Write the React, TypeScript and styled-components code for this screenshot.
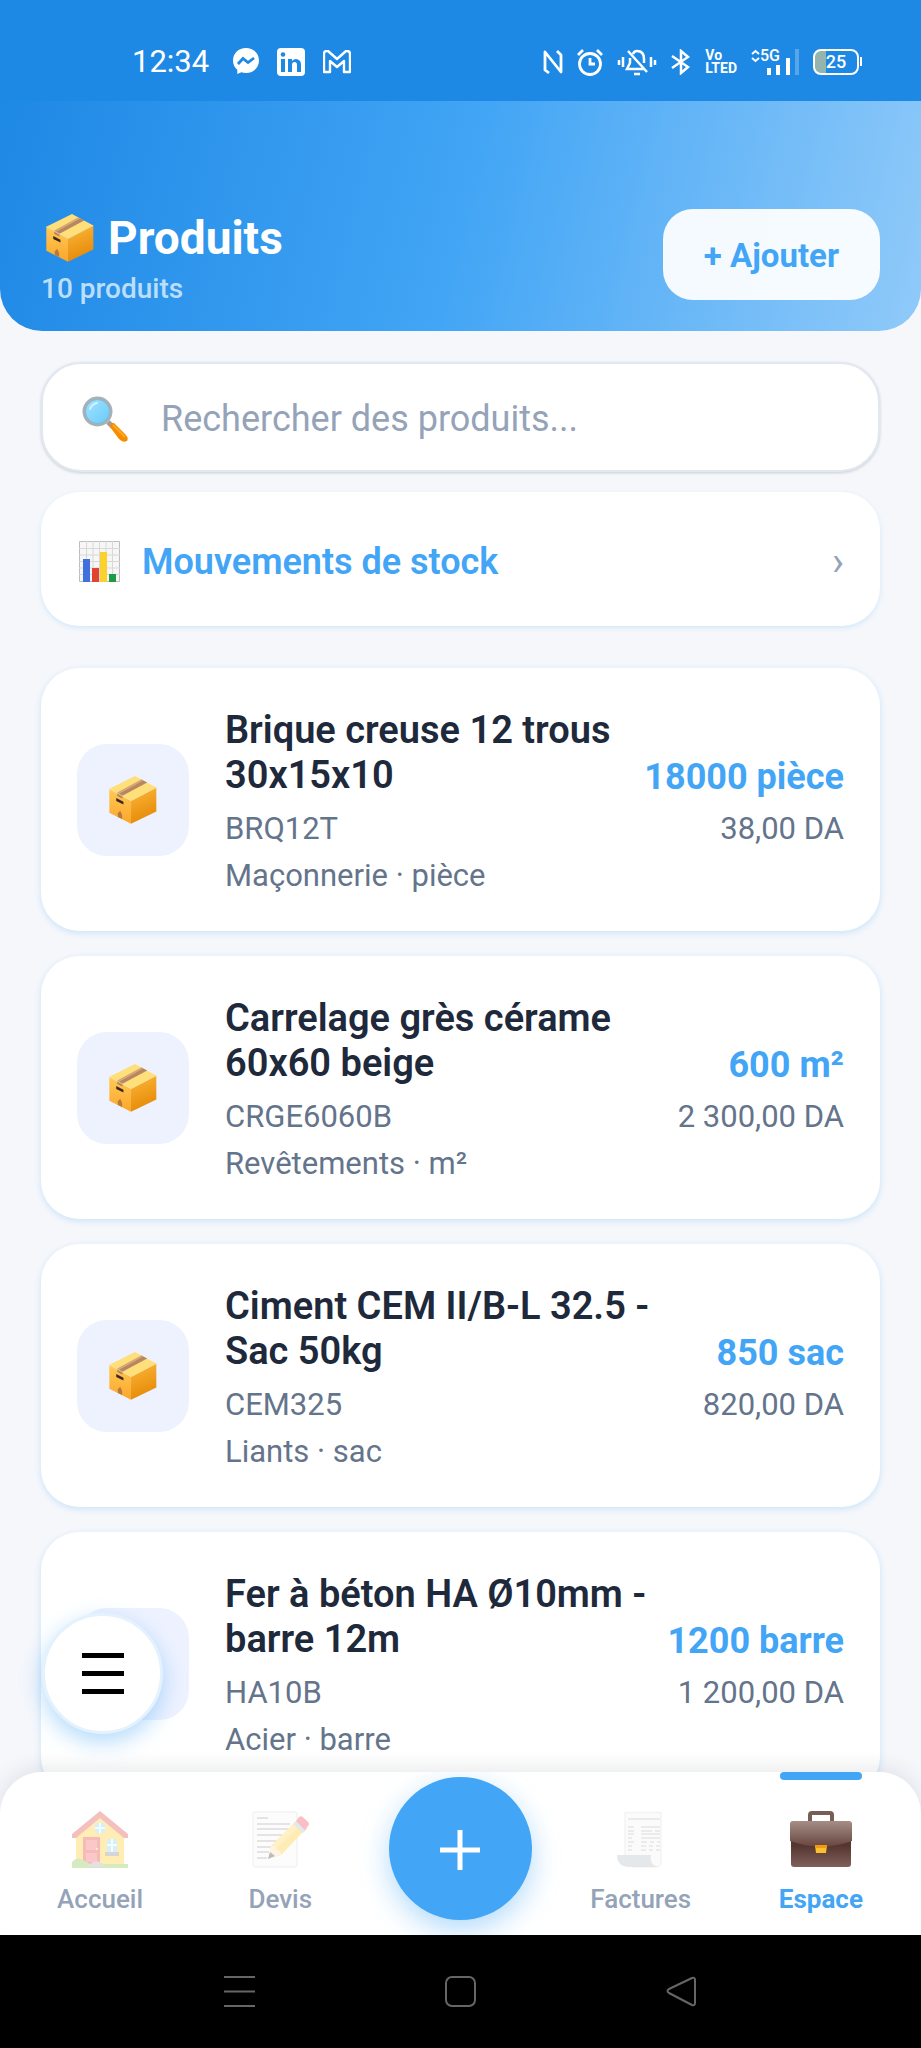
import React from 'react';
import styled, { createGlobalStyle } from 'styled-components';

interface Product {
  name: string;
  code: string;
  category: string;
  unit: string;
  stock: string;
  price: string;
}

const products: Product[] = [
  { name: 'Brique creuse 12 trous 30x15x10', code: 'BRQ12T', category: 'Maçonnerie', unit: 'pièce', stock: '18000', price: '38,00' },
  { name: 'Carrelage grès cérame 60x60 beige', code: 'CRGE6060B', category: 'Revêtements', unit: 'm²', stock: '600', price: '2 300,00' },
  { name: 'Ciment CEM II/B-L 32.5 - Sac 50kg', code: 'CEM325', category: 'Liants', unit: 'sac', stock: '850', price: '820,00' },
  { name: 'Fer à béton HA Ø10mm - barre 12m', code: 'HA10B', category: 'Acier', unit: 'barre', stock: '1200', price: '1 200,00' },
];

const GlobalStyle = createGlobalStyle`
  :root {
    --primary: #42a5f5;
    --primary-dark: #1e88e5;
    --text: #1e293b;
    --text-soft: #64748b;
    --text-muted: #94a3b8;
    --surface: #f5f7fb;
  }

  * {
    box-sizing: border-box;
  }

  body {
    margin: 0;
    font-family: Roboto, 'Liberation Sans', sans-serif;
    color: var(--text);
    background: var(--surface);
  }

  button,
  input {
    font-family: inherit;
  }

  button {
    padding: 0;
    border: 0;
    cursor: pointer;
  }

  h1,
  h2,
  p {
    margin: 0;
  }

  svg {
    display: block;
    flex-shrink: 0;
  }
`;

const Screen = styled.div`
  display: flex;
  flex-direction: column;
  height: 100vh;
  overflow: hidden;
`;

/* Status bar */

const StatusBar = styled.div`
  display: flex;
  flex-shrink: 0;
  align-items: center;
  justify-content: space-between;
  height: 101px;
  padding: 22px 59px 0 132px;
  color: #fff;
  background: var(--primary-dark);
`;

const StatusGroup = styled.div<{ $gap: number }>`
  display: flex;
  align-items: center;
  gap: ${({ $gap }) => $gap}px;
`;

const Clock = styled.time`
  margin-right: 6px;
  font-size: 31px;
  line-height: 36px;
`;

const Volte = styled.span`
  display: flex;
  flex-direction: column;
  font-size: 14px;
  font-weight: 700;
  line-height: 13px;
`;

const Network = styled.span`
  display: flex;
  align-items: flex-start;
`;

const NetworkLabel = styled.span`
  margin-right: -14px;
  font-size: 16px;
  font-weight: 500;
  line-height: 14px;
`;

const Battery = styled.span`
  position: relative;
  display: flex;
  align-items: center;
  justify-content: center;
  width: 46px;
  height: 26px;
  margin-right: 3px;
  border: 2px solid #fff;
  border-radius: 8px;
  font-size: 18px;
  font-weight: 500;
  line-height: 20px;
  background: linear-gradient(to right, #93b5ad 25%, transparent 25%);

  &::after {
    content: '';
    position: absolute;
    right: -5px;
    width: 2px;
    height: 9px;
    background: #fff;
  }
`;

/* Header */

const Header = styled.header`
  display: flex;
  flex-shrink: 0;
  align-items: center;
  justify-content: space-between;
  padding: 102px 41px 26px;
  border-radius: 0 0 42px 42px;
  background: linear-gradient(104deg, #1e88e5, #42a5f5 50%, #90caf9);
`;

const Title = styled.h1`
  display: flex;
  align-items: center;
  gap: 14px;
  padding-left: 5px;
  font-size: 46px;
  font-weight: 700;
  line-height: 70px;
  color: #fff;
`;

const Subtitle = styled.p`
  font-size: 28px;
  font-weight: 500;
  line-height: 32px;
  color: #bbdefb;
`;

const AddButton = styled.button`
  height: 91px;
  padding: 3px 41px 0;
  border-radius: 30px;
  font-size: 33px;
  font-weight: 700;
  color: var(--primary);
  background: rgba(255, 255, 255, 0.93);
`;

/* Content */

const Body = styled.div`
  position: relative;
  display: flex;
  flex: 1;
  flex-direction: column;
  min-height: 0;
`;

const Content = styled.main`
  flex: 1;
  padding: 31px 41px 0;
  overflow: hidden;
`;

const SearchBox = styled.label`
  display: flex;
  align-items: center;
  gap: 33px;
  height: 110px;
  padding: 3px 39px 0;
  border: 2px solid #e2e8f0;
  border-radius: 40px;
  background: #fff;
  box-shadow: 0 1px 3px rgba(30, 41, 59, 0.2);
`;

const SearchInput = styled.input`
  flex: 1;
  min-width: 0;
  padding: 0;
  border: 0;
  outline: 0;
  font-size: 36px;
  line-height: 42px;
  color: var(--text);
  background: none;

  &::placeholder {
    color: var(--text-muted);
    opacity: 1;
  }
`;

const StockLink = styled.a`
  display: flex;
  align-items: center;
  gap: 22px;
  height: 134px;
  margin: 20px 0 42px;
  padding: 5px 36px 0 38px;
  border-radius: 38px;
  font-size: 36px;
  font-weight: 600;
  line-height: 42px;
  color: var(--primary);
  text-decoration: none;
  background: #fff;
  box-shadow: 0 2px 5px rgba(66, 165, 245, 0.18);
`;

const Chevron = styled.span`
  margin-left: auto;
  font-size: 40px;
  font-weight: 400;
  color: var(--text-muted);
`;

const ProductList = styled.ul`
  display: flex;
  flex-direction: column;
  gap: 25px;
  margin: 0;
  padding: 0;
  list-style: none;
`;

const ProductCard = styled.li`
  display: flex;
  align-items: center;
  padding: 36px 36px 35px;
  border-radius: 38px;
  background: #fff;
  box-shadow: 0 2px 6px rgba(66, 165, 245, 0.24);
`;

const ProductThumb = styled.div`
  display: flex;
  flex-shrink: 0;
  align-items: center;
  justify-content: center;
  width: 112px;
  height: 112px;
  margin-right: 36px;
  border-radius: 30px;
  background: #eef2ff;
`;

const ProductInfo = styled.div`
  flex: 1;
  padding: 4px 12px 0 0;
`;

const ProductName = styled.h2`
  margin-bottom: 10px;
  font-size: 38px;
  font-weight: 600;
  line-height: 45px;
`;

const ProductMeta = styled.p`
  font-size: 31px;
  line-height: 41px;
  color: var(--text-soft);

  & + & {
    margin-top: 6px;
  }
`;

const ProductStock = styled.div`
  padding-top: 4px;
  text-align: right;
  white-space: nowrap;
`;

const Quantity = styled.p`
  margin-bottom: 10px;
  font-size: 36px;
  font-weight: 700;
  line-height: 42px;
  color: var(--primary);
`;

const MenuButton = styled.button`
  position: absolute;
  bottom: 201px;
  left: 42px;
  display: flex;
  align-items: center;
  justify-content: center;
  width: 121px;
  height: 121px;
  border: 3px solid #e3f2fd;
  border-radius: 50%;
  color: #000;
  background: #fff;
  box-shadow: 0 8px 22px rgba(66, 165, 245, 0.4);
`;

/* Bottom navigation */

// pulled up over the list, which stays visible behind the rounded corners
const TabBarShell = styled.div`
  position: relative;
  margin-top: -163px;
  border-radius: 42px 42px 0 0;
  box-shadow: 0 -4px 20px rgba(30, 41, 59, 0.1);
`;

const TabBar = styled.nav`
  display: grid;
  grid-template-columns: repeat(5, 1fr);
  height: 163px;
  padding: 0 10px;
  border-radius: 42px 42px 0 0;
  overflow: hidden;
  background: #fff;
`;

const Tab = styled.a<{ $active?: boolean }>`
  display: flex;
  flex-direction: column;
  align-items: center;
  font-size: 26px;
  font-weight: ${({ $active }) => ($active ? 700 : 500)};
  line-height: 32px;
  color: ${({ $active }) => ($active ? 'var(--primary)' : 'var(--text-muted)')};
  text-decoration: none;

  &::before {
    content: '';
    width: 82px;
    height: 8px;
    margin-bottom: 31px;
    border-radius: 4px;
    background: ${({ $active }) => ($active ? 'var(--primary)' : 'transparent')};
  }

  svg {
    margin-bottom: 15px;
    opacity: ${({ $active }) => ($active ? 1 : 0.35)};
  }
`;

const CreateButton = styled.button`
  display: flex;
  align-items: center;
  justify-content: center;
  justify-self: center;
  width: 143px;
  height: 143px;
  margin-top: 5px;
  padding-top: 3px;
  border-radius: 50%;
  color: #fff;
  background: var(--primary);
  box-shadow: 0 10px 28px rgba(66, 165, 245, 0.4);
`;

const SystemNav = styled.div`
  display: grid;
  flex-shrink: 0;
  grid-template-columns: repeat(3, 1fr);
  height: 113px;
  padding: 0 14%;
  background: #000;
`;

const SystemButton = styled.button`
  display: flex;
  align-items: center;
  justify-content: center;
  color: #666;
  background: none;
`;

/* Illustrations */

const BoxIcon = () => (
  <svg width="48" height="48" viewBox="0 0 144 146" aria-hidden="true">
    <defs>
      <linearGradient id="box-left" x1="0" y1="0" x2="0" y2="1">
        <stop offset="0" stopColor="#ffca55" />
        <stop offset="1" stopColor="#fba62b" />
      </linearGradient>
      <linearGradient id="box-right" x1="0" y1="0" x2="0.3" y2="1">
        <stop offset="0" stopColor="#fdb83c" />
        <stop offset="1" stopColor="#e68a08" />
      </linearGradient>
    </defs>
    <path d="M78 0 143 35 66 75 0 39Z" fill="#ffdf79" />
    <path d="M0 39 66 75V145L0 112Z" fill="url(#box-left)" />
    <path d="M66 75 143 35V108L66 145Z" fill="url(#box-right)" />
    <path d="M98 11 115 20 40 60V69L24 61V51Z" fill="#b88761" />
    <path d="M24 51 98 11 103 14 30 54Z" fill="#d6a977" />
    <path d="M21 67 43 78V87L21 76Z" fill="#3e2723" />
    <path d="M26 113 33 106 39 119V131L26 125Z" fill="#b9793c" />
    <path d="M0 39 66 75 143 35" fill="none" stroke="#ffe9a0" strokeWidth="2" />
  </svg>
);

const MagnifierIcon = () => (
  <svg width="46" height="46" viewBox="0 0 46 46" aria-hidden="true">
    <defs>
      <linearGradient id="lens" x1="0" y1="0" x2="1" y2="1">
        <stop offset="0" stopColor="#a8e2ff" />
        <stop offset="1" stopColor="#63cbfb" />
      </linearGradient>
    </defs>
    <path d="m26 26 5 5" stroke="#9e9e9e" strokeWidth="5" />
    <path d="M28 31q0-4 4-4l11 11q4 4 2 7-4 2-8-2Z" fill="#f88c00" />
    <path d="m31 29 12 12" stroke="#ffa726" strokeWidth="2" />
    <circle cx="15.5" cy="15.5" r="13.5" fill="url(#lens)" stroke="#a9b0b4" strokeWidth="3" />
    <circle cx="15.5" cy="15.5" r="12" fill="none" stroke="#7fb8d4" />
    <path d="M8 13q2-5 7-6" fill="none" stroke="#d5f2ff" strokeWidth="2" strokeLinecap="round" />
  </svg>
);

const ChartIcon = () => (
  <svg width="41" height="41" viewBox="0 0 41 41" aria-hidden="true">
    <path d="M.5.5h40v40H.5Z" fill="#f6f6f6" stroke="#bdbdbd" />
    <path d="M7.5 0v41M14 0v41M20.5 0v41M27 0v41M33.5 0v41M0 7.5h41M0 14h41M0 20.5h41M0 27h41M0 33.5h41" stroke="#d8d8d8" />
    <path d="M4 18h7v23H4Z" fill="#3f70dd" />
    <path d="M13 27h7v14h-7Z" fill="#e24330" />
    <path d="M21 11h7v30h-7Z" fill="#fbd22d" />
    <path d="M30 33h7v8h-7Z" fill="#1f9a45" />
  </svg>
);

const HouseIcon = () => (
  <svg width="56" height="57" viewBox="0 0 56 57" aria-hidden="true">
    <path d="M4 26 28 5l24 21v30H4Z" fill="#ffca28" />
    <path d="M11 26h17v27H11Z" fill="#e53935" />
    <path d="M14 29h11v10H14Zm0 13h11v9H14Z" fill="#f0625f" />
    <circle cx="25" cy="38" r="1" fill="#ffe082" />
    <path d="M23 12h10v10H23Z" fill="#81d4fa" />
    <path d="M28 12v10M23 17h10" stroke="#fff" strokeWidth="1.5" />
    <path d="M35 28h10v13H35Z" fill="#81d4fa" />
    <path d="M40 28v13M35 34h10" stroke="#fff" strokeWidth="1.5" />
    <path d="M33 41h14v4H33Z" fill="#8d8585" />
    <path d="M0 23 28 0l28 23v4h-4L28 7 4 27H0Z" fill="#dd4b46" />
    <path d="M0 57v-6q5-6 11-2l7 4h38v4Z" fill="#8bc34a" />
    <path d="M16 56q5-8 12-5 4 2 5 5Z" fill="#b5a9ac" />
  </svg>
);

const MemoIcon = () => (
  <svg width="57" height="57" viewBox="0 0 57 57" aria-hidden="true">
    <rect x="1" y="1" width="44" height="55" rx="2" fill="#f7f7f7" stroke="#cfcfcf" />
    <path d="M5 7h11M5 13h33M5 18h31M5 24h26M5 30h20M5 36h14M5 41h12M5 47h10" stroke="#a0a0a0" strokeWidth="1.5" />
    <path d="m16 48 3-13 22-22 10 8-22 23Z" fill="#ffca28" />
    <path d="m19 35 22-22 4 4-22 22Z" fill="#ffd95c" />
    <path d="m16 48 3-13q5 0 6 4 4 0 4 5Z" fill="#ffe0b2" />
    <path d="m16 48 2-7 5 4Z" fill="#424242" />
    <path d="m41 13 4-4 10 9-4 4Z" fill="#b0bec5" />
    <path d="m44 10 3-4q2-2 5 1l4 4q2 2 0 4l-3 4Z" fill="#ee4a5c" />
  </svg>
);

const ReceiptIcon = () => (
  <svg width="56" height="57" viewBox="0 0 56 57" aria-hidden="true">
    <path d="m12 1 2 1 2-1 2 1 2-1 2 1 2-1 2 1 2-1 2 1 2-1 2 1 2-1 2 1 2-1 2 1 2-1 2 1 2-1v50q0 5-5 5H20q-8-3-8-13Z" fill="#f4f4f4" stroke="#d5d5d5" />
    <path d="M15 8h32M15 16h6M28 16h19M15 20h6M28 20h11m3 0h5M15 23h6M28 23h19M15 27h4m9 0h19M15 31h6m7 0h6m3 0h4m3 0h3M15 35h4m9 0h5m3 0h4m3 0h4M15 39h4m9 0h5m3 0h4m3 0h4" stroke="#999" strokeWidth="1.2" />
    <path d="M4 44h34q-2 10 8 12H15Q4 55 4 44Z" fill="#b7c0c8" />
  </svg>
);

const BriefcaseIcon = () => (
  <svg width="62" height="57" viewBox="0 0 62 57" aria-hidden="true">
    <defs>
      <linearGradient id="case-body" x1="0" y1="0" x2="0" y2="1">
        <stop offset="0.4" stopColor="#54352f" />
        <stop offset="1" stopColor="#80605a" />
      </linearGradient>
      <linearGradient id="case-flap" x1="0" y1="0" x2="0" y2="1">
        <stop offset="0" stopColor="#a58e87" />
        <stop offset="1" stopColor="#68463f" />
      </linearGradient>
    </defs>
    <path d="M20 11V4q0-2 2-2h18q2 0 2 2v7" fill="none" stroke="#795c54" strokeWidth="4" />
    <path d="M1 20h60v33q0 3-3 3H4q-3 0-3-3Z" fill="url(#case-body)" />
    <path d="M0 13q0-3 3-3h56q3 0 3 3v17Q31 41 0 30Z" fill="url(#case-flap)" />
    <path d="M25 34h12l-1 8H26Z" fill="#fbc02d" />
    <path d="M25 34h12v3H25Z" fill="#f09a13" />
  </svg>
);

const StatusIcons = () => (
  <>
    <svg width="20" height="26" viewBox="0 0 20 26" fill="none" stroke="#fff" strokeWidth="2.8">
      <path d="M6 24 2 21V3l16 20V6l-4-4" strokeLinejoin="round" />
    </svg>
    <svg width="26" height="28" viewBox="0 0 26 28" fill="none" stroke="#fff" strokeWidth="2.8">
      <circle cx="13" cy="16" r="10.5" />
      <path d="M13 10v6h5M1 7l5-5M25 7l-5-5" />
    </svg>
    <svg width="40" height="28" viewBox="0 0 40 28" fill="none" stroke="#fff" strokeWidth="2.5">
      <path d="M2 12v5M6 9v10M34 9v10M38 12v5M16 6q1-3 4-3 7 0 7 8v4M13 10v5l-3 6h17M11 3l19 21M17 26h6" />
    </svg>
    <svg width="20" height="26" viewBox="0 0 20 26" fill="none" stroke="#fff" strokeWidth="2.5">
      <path d="m1 7 16 11-7 6V2l7 6L1 19" />
    </svg>
  </>
);

const Bars = ({ size, height, stroke }: { size: number; height: number; stroke: number }) => (
  <svg width={size} height={height} viewBox={`0 0 ${size} ${height}`} stroke="currentColor" strokeWidth={stroke}>
    <path d={`M0 ${stroke / 2}h${size}M0 ${height / 2}h${size}M0 ${height - stroke / 2}h${size}`} />
  </svg>
);

const tabs = [
  { label: 'Accueil', icon: <HouseIcon /> },
  { label: 'Devis', icon: <MemoIcon /> },
  null,
  { label: 'Factures', icon: <ReceiptIcon /> },
  { label: 'Espace', icon: <BriefcaseIcon />, active: true },
];

const ProductRow: React.FC<{ product: Product }> = ({ product }) => {
  return (
    <ProductCard>
      <ProductThumb>
        <BoxIcon />
      </ProductThumb>
      <ProductInfo>
        <ProductName>{product.name}</ProductName>
        <ProductMeta>{product.code}</ProductMeta>
        <ProductMeta>
          {product.category} · {product.unit}
        </ProductMeta>
      </ProductInfo>
      <ProductStock>
        <Quantity>
          {product.stock} {product.unit}
        </Quantity>
        <ProductMeta>{product.price} DA</ProductMeta>
      </ProductStock>
    </ProductCard>
  );
};

const App: React.FC = () => {
  return (
    <>
      <GlobalStyle />
      <Screen>
        <StatusBar>
          <StatusGroup $gap={18}>
            <Clock>12:34</Clock>
            <svg width="26" height="27" viewBox="0 0 26 27">
              <path d="M13 0C5.5 0 0 5.4 0 12.5c0 4 1.6 7 4.3 9.3V26l4-1.7c1.5.5 3 .7 4.7.7 7.5 0 13-5.4 13-12.500S20.5 0 13 0Z" fill="#fff" />
              <path d="m5 16 5-5.5 5 4 6-4.500" fill="none" stroke="#1e88e5" strokeWidth="2.8" />
            </svg>
            <svg width="28" height="28" viewBox="0 0 28 28">
              <rect width="28" height="28" rx="4" fill="#fff" />
              <path d="M4 11h4v13H4ZM11 11h4v2q4-4 8 0 1 1 1 4v7h-4v-7q0-3-2.5-3T15 17v7h-4Z" fill="#1e88e5" />
              <circle cx="6" cy="6.5" r="2.3" fill="#1e88e5" />
            </svg>
            <svg width="28" height="24" viewBox="0 0 28 24" fill="none" stroke="#fff" strokeWidth="2.4">
              <path d="M1 22V4q0-3 3-3h1l9 8 9-8h1q3 0 3 3v18h-6V11l-7 6-7-6v11Z" strokeLinejoin="round" />
            </svg>
          </StatusGroup>
          <StatusGroup $gap={14}>
            <StatusIcons />
            <Volte>
              <span>Vo</span>
              <span>LTED</span>
            </Volte>
            <Network>
              <svg width="9" height="14" viewBox="0 0 9 14" fill="none" stroke="#fff" strokeWidth="2">
                <path d="m1 5 3.5-3L8 5M1 9l3.5 3L8 9" />
              </svg>
              <NetworkLabel>5G</NetworkLabel>
              <svg width="33" height="26" viewBox="0 0 33 26" stroke="#fff" strokeWidth="4">
                <path d="M3 19v7M12 16v10M22 9v17" />
                <path d="M31 0v26" opacity="0.25" />
              </svg>
            </Network>
            <Battery>25</Battery>
          </StatusGroup>
        </StatusBar>

        <Header>
          <div>
            <Title>
              <BoxIcon />
              Produits
            </Title>
            <Subtitle>10 produits</Subtitle>
          </div>
          <AddButton type="button">+ Ajouter</AddButton>
        </Header>

        <Body>
          <Content>
            <SearchBox>
              <MagnifierIcon />
              <SearchInput type="text" aria-label="Rechercher des produits" placeholder="Rechercher des produits..." />
            </SearchBox>
            <StockLink href="#mouvements">
              <ChartIcon />
              Mouvements de stock
              <Chevron>›</Chevron>
            </StockLink>
            <ProductList>
              {products.map(product => (
                <ProductRow key={product.code} product={product} />
              ))}
            </ProductList>
          </Content>
          <TabBarShell>
            <TabBar>
              {tabs.map(tab =>
                tab ? (
                  <Tab key={tab.label} href={`#${tab.label.toLowerCase()}`} $active={tab.active}>
                    {tab.icon}
                    {tab.label}
                  </Tab>
                ) : (
                  <CreateButton key="create" type="button" aria-label="Créer">
                    <svg width="40" height="40" viewBox="0 0 40 40" stroke="currentColor" strokeWidth="5">
                      <path d="M20 0v40M0 20h40" />
                    </svg>
                  </CreateButton>
                )
              )}
            </TabBar>
          </TabBarShell>
          <MenuButton type="button" aria-label="Menu">
            <Bars size={42} height={41} stroke={5} />
          </MenuButton>
        </Body>

        <SystemNav>
          <SystemButton type="button" aria-label="Applications récentes">
            <Bars size={31} height={31} stroke={2} />
          </SystemButton>
          <SystemButton type="button" aria-label="Écran d'accueil">
            <svg width="31" height="31" viewBox="0 0 31 31" fill="none" stroke="currentColor" strokeWidth="2">
              <rect x="1" y="1" width="29" height="29" rx="6" />
            </svg>
          </SystemButton>
          <SystemButton type="button" aria-label="Retour">
            <svg width="31" height="31" viewBox="0 0 31 31" fill="none" stroke="currentColor" strokeWidth="2" strokeLinejoin="round">
              <path d="M26 2 3 13q-3 2 0 4l23 12q3 1 3-2V4q0-3-3-2Z" />
            </svg>
          </SystemButton>
        </SystemNav>
      </Screen>
    </>
  );
};

export default App;
